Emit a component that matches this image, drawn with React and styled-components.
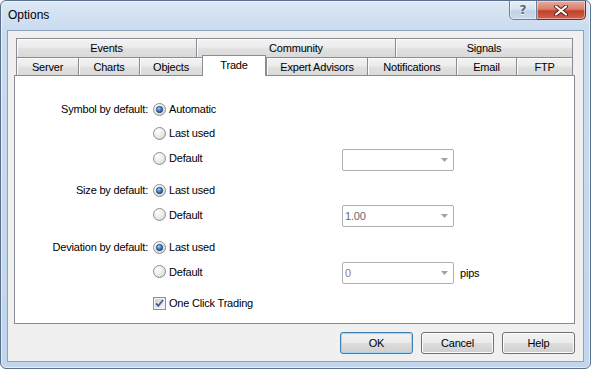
import React from 'react';
import styled, { createGlobalStyle } from 'styled-components';

const Global = createGlobalStyle`
  html, body { margin: 0; padding: 0; background: #ffffff; }
  body { font-family: "Liberation Sans", Arial, sans-serif; font-size: 11px; color: #000; letter-spacing: -0.2px; }
  * { box-sizing: border-box; }
`;

const Window = styled.div`
  width: 591px;
  height: 369px;
  border: 1px solid #5a6f8a;
  border-radius: 6px 6px 6px 6px;
  background: linear-gradient(#dce8f5 0px, #cadcef 28px, #c1d5ec 100%);
  box-shadow: inset 0 0 0 1px rgba(255, 255, 255, 0.55);
  display: flex;
  flex-direction: column;
  overflow: hidden;
`;

const TitleBar = styled.div`
  height: 29px;
  display: flex;
  align-items: flex-start;
  padding-left: 7px;
  padding-right: 4px;
`;

const Title = styled.div`
  font-size: 12px;
  letter-spacing: 0;
  line-height: 29px;
  height: 29px;
  color: #000;
  flex: 1;
`;

const CaptionButton = styled.div`
  height: 19px;
  width: ${p => p.$w}px;
  display: flex;
  align-items: center;
  justify-content: center;
  border: 1px solid ${p => (p.$close ? '#6b2f26' : '#6d7f97')};
  border-top: none;
  border-left: ${p => (p.$close ? 'none' : '1px solid #6d7f97')};
  border-radius: ${p => (p.$close ? '0 0 5px 0' : '0 0 0 5px')};
  background: ${p =>
    p.$close
      ? 'linear-gradient(#e6aa9d 0%, #d9826f 45%, #c2412a 55%, #d0634a 100%)'
      : 'linear-gradient(#e7eff8 0%, #d6e3f1 45%, #c0d2e8 55%, #c9daee 100%)'};
  box-shadow: inset 0 0 0 1px rgba(255, 255, 255, 0.45);
`;

const HelpGlyph = styled.span`
  font-family: "DejaVu Sans", sans-serif;
  font-weight: bold;
  font-size: 12px;
  color: #56657a;
  text-shadow: 0 1px 0 #ffffff;
  line-height: 1;
`;

const Client = styled.div`
  margin: 0 6px 6px 6px;
  flex: 1;
  background: #f0f0f0;
  border: 1px solid #8ea1bb;
  padding: 7px 8px 7px 6px;
  display: flex;
  flex-direction: column;
`;

const TabRow = styled.div`
  display: flex;
  margin: 0 2px;
  height: ${p => p.$h}px;
  align-items: flex-end;
`;

const Tab = styled.div`
  width: ${p => p.$w}px;
  height: ${p => (p.$active ? p.$h + 3 : p.$h)}px;
  margin-top: ${p => (p.$active ? -2 : 0)}px;
  margin-bottom: ${p => (p.$active ? -1 : 0)}px;
  z-index: ${p => (p.$active ? 2 : 0)};
  align-self: flex-start;
  border-top: 1px solid #898c95;
  border-left: 1px solid #898c95;
  border-right: ${p => (p.$last || p.$active ? '1px solid #898c95' : 'none')};
  background: ${p =>
    p.$active
      ? '#ffffff'
      : 'linear-gradient(#f3f3f3 0%, #ececec 45%, #e0e0e0 55%, #dadada 100%)'};
  box-shadow: ${p => (p.$active ? 'none' : 'inset 1px 1px 0 #fbfbfb')};
  display: flex;
  justify-content: center;
  padding-top: ${p => (p.$active ? 3 : 3)}px;
  font-size: 11px;
  line-height: 13px;
  color: #000;
  white-space: nowrap;
`;

const Panel = styled.div`
  height: 249px;
  background: #ffffff;
  border: 1px solid #898c95;
  padding-top: 21px;
  display: flex;
  flex-direction: column;
  gap: 9px;
`;

const Group = styled.div`
  display: flex;
  flex-direction: column;
  margin-top: ${p => p.$mt || 0}px;
`;

const Row = styled.div`
  display: grid;
  grid-template-columns: 133px 194px 112px auto;
  height: 24px;
  align-items: center;
`;

const Label = styled.div`
  text-align: right;
  white-space: nowrap;
`;

const Option = styled.div`
  display: flex;
  align-items: center;
  padding-left: 5px;
  gap: 3px;
  white-space: nowrap;
`;

const Combo = styled.div`
  align-self: start;
  margin-top: ${p => p.$mt}px;
  height: 22px;
  width: 112px;
  border: 1px solid #adb2b5;
  border-radius: 2px;
  background: #ffffff;
  display: flex;
  align-items: center;
  justify-content: space-between;
  padding: 0 5px 0 2px;
  color: ${p => p.$color || '#6d6d6d'};
`;

const Unit = styled.div`
  padding-left: 6px;
  margin-top: 3px;
`;

const ButtonBar = styled.div`
  margin-top: 8px;
  display: flex;
  justify-content: flex-end;
  gap: 8px;
`;

const Button = styled.div`
  width: 73px;
  height: 22px;
  border: 1px solid ${p => (p.$default ? '#3c7fb1' : '#707070')};
  border-radius: 3px;
  background: linear-gradient(#f2f2f2 0%, #ebebeb 48%, #dddddd 52%, #cfcfcf 100%);
  box-shadow: inset 0 0 0 1px ${p => (p.$default ? '#9fd7f5' : '#fcfcfc')};
  display: flex;
  align-items: center;
  justify-content: center;
  color: #000;
`;

const Radio = ({ checked }) => (
  <svg width="13" height="13" viewBox="0 0 13 13">
    <defs>
      <radialGradient id="rbg" cx="0.35" cy="0.3" r="0.85">
        <stop offset="0" stopColor="#ffffff" />
        <stop offset="0.6" stopColor="#e8e8e8" />
        <stop offset="1" stopColor="#c9c9c9" />
      </radialGradient>
      <radialGradient id="rdot" cx="0.4" cy="0.35" r="0.75">
        <stop offset="0" stopColor="#9cd0fa" />
        <stop offset="0.55" stopColor="#3a78c2" />
        <stop offset="1" stopColor="#143a73" />
      </radialGradient>
    </defs>
    <circle cx="6.5" cy="6.5" r="6" fill="url(#rbg)" stroke="#8e8f8f" />
    {checked && <circle cx="6.5" cy="6.5" r="3.2" fill="url(#rdot)" stroke="#1d3a66" strokeWidth="0.7" />}
  </svg>
);

const Check = () => (
  <svg width="13" height="13" viewBox="0 0 13 13">
    <defs>
      <linearGradient id="cbg" x1="0" y1="0" x2="1" y2="1">
        <stop offset="0" stopColor="#cbcfd5" />
        <stop offset="1" stopColor="#f6f6f6" />
      </linearGradient>
    </defs>
    <rect x="0.5" y="0.5" width="12" height="12" fill="#f4f4f4" stroke="#8e8f8f" />
    <rect x="2" y="2" width="9" height="9" fill="url(#cbg)" />
    <path d="M3 6.3 L5.3 8.8 L10 3" fill="none" stroke="#4a5f97" strokeWidth="1.8" />
  </svg>
);

const Arrow = () => (
  <svg width="7" height="4" viewBox="0 0 7 4">
    <path d="M0 0 H7 L3.5 4 Z" fill="#a2a2a2" />
  </svg>
);

const CloseX = () => (
  <svg width="16" height="11" viewBox="0 0 16 11">
    <path d="M3 1.5 L13 9.5 M13 1.5 L3 9.5" stroke="#5e1f15" strokeWidth="4" strokeLinecap="round" />
    <path d="M3 1.5 L13 9.5 M13 1.5 L3 9.5" stroke="#ffffff" strokeWidth="2.2" strokeLinecap="round" />
  </svg>
);

const row1 = [
  ['Events', 180],
  ['Community', 199],
  ['Signals', 178],
];
const row2 = [
  ['Server', 62],
  ['Charts', 61],
  ['Objects', 63],
  ['Trade', 64],
  ['Expert Advisors', 101],
  ['Notifications', 89],
  ['Email', 60],
  ['FTP', 57],
];

export default function App() {
  return (
    <>
      <Global />
      <Window>
        <TitleBar>
          <Title>Options</Title>
          <CaptionButton $w={28}>
            <HelpGlyph>?</HelpGlyph>
          </CaptionButton>
          <CaptionButton $w={49} $close>
            <CloseX />
          </CaptionButton>
        </TitleBar>
        <Client>
          <TabRow $h={19}>
            {row1.map(([t, w], i) => (
              <Tab key={t} $w={w} $h={19} $last={i === row1.length - 1}>{t}</Tab>
            ))}
          </TabRow>
          <TabRow $h={18}>
            {row2.map(([t, w], i) => (
              <Tab key={t} $w={w} $h={18} $active={t === 'Trade'} $last={i === row2.length - 1}>{t}</Tab>
            ))}
          </TabRow>
          <Panel>
            <Group>
              <Row>
                <Label>Symbol by default:</Label>
                <Option><Radio checked />Automatic</Option>
              </Row>
              <Row>
                <span />
                <Option><Radio />Last used</Option>
              </Row>
              <Row>
                <span />
                <Option><Radio />Default</Option>
                <Combo $mt={4}><span /><Arrow /></Combo>
              </Row>
            </Group>
            <Group>
              <Row>
                <Label>Size by default:</Label>
                <Option><Radio checked />Last used</Option>
              </Row>
              <Row>
                <span />
                <Option><Radio />Default</Option>
                <Combo $mt={3} $color="#5d6a78"><span>1.00</span><Arrow /></Combo>
              </Row>
            </Group>
            <Group>
              <Row>
                <Label>Deviation by default:</Label>
                <Option><Radio checked />Last used</Option>
              </Row>
              <Row>
                <span />
                <Option><Radio />Default</Option>
                <Combo $mt={3} $color="#8a7a66"><span>0</span><Arrow /></Combo>
                <Unit>pips</Unit>
              </Row>
            </Group>
            <Group $mt={-1}>
              <Row>
                <span />
                <Option><Check />One Click Trading</Option>
              </Row>
            </Group>
          </Panel>
          <ButtonBar>
            <Button $default>OK</Button>
            <Button>Cancel</Button>
            <Button>Help</Button>
          </ButtonBar>
        </Client>
      </Window>
    </>
  );
}
